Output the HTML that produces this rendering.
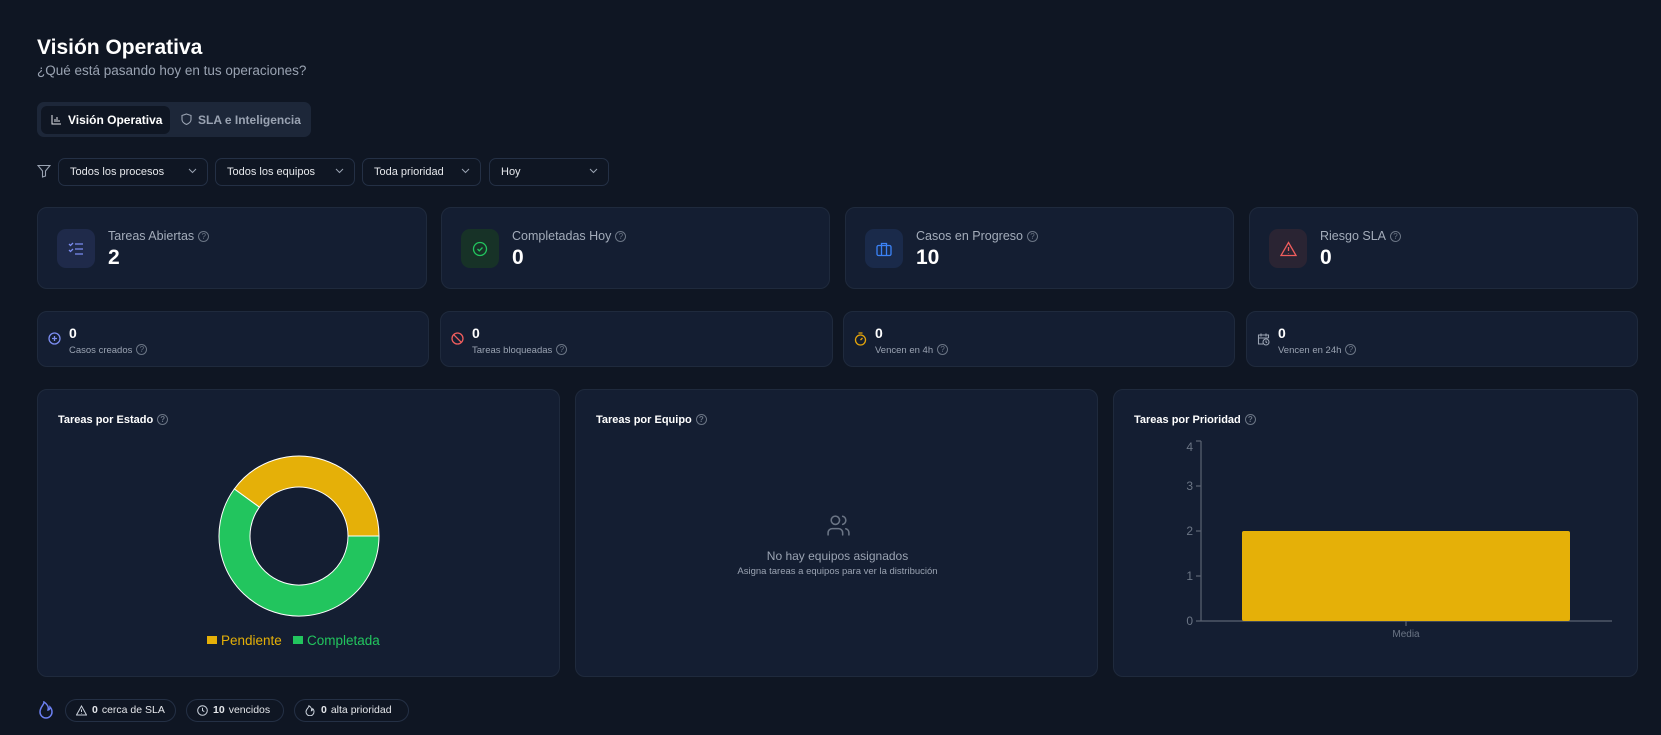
<!DOCTYPE html>
<html><head><meta charset="utf-8"><style>
*{box-sizing:border-box;margin:0;padding:0}
body{width:1661px;height:735px;background:#0f1623;font-family:"Liberation Sans",sans-serif;color:#e5e7eb;position:relative;overflow:hidden}
.a{position:absolute}
.card{position:absolute;background:#141e32;border:1px solid #1f2a3d;border-radius:10px}
.sel{position:absolute;top:158px;height:28px;border:1px solid #243045;border-radius:7px;font-size:11px;color:#e5e7eb;padding:0 0 0 11px;line-height:26px;background:#0f1623}
.sel svg{position:absolute;right:10px;top:9px}
.ib{position:absolute;left:19px;top:21px;width:38px;height:39px;border-radius:9px;display:flex;align-items:center;justify-content:center}
.lbl{position:absolute;left:70px;top:21px;font-size:12.5px;color:#a3acba}
.val{position:absolute;left:70px;top:38px;font-size:21px;font-weight:bold;color:#fff}
.q{display:inline-block;width:11px;height:11px;border:1px solid #6b7585;border-radius:50%;font-size:8px;line-height:9px;text-align:center;color:#6b7585;vertical-align:1px;margin-left:4px}
.sv{position:absolute;left:31px;top:13px;font-size:14px;font-weight:bold;color:#fff}
.sl{position:absolute;left:31px;top:32px;font-size:9.5px;color:#9aa3b2}
.si{position:absolute;left:10px;top:20px}
.ct{position:absolute;left:20px;top:24px;font-size:11px;font-weight:bold;color:#fff}
.pill{position:absolute;top:699px;height:23px;border:1px solid #243045;border-radius:12px;font-size:10.5px;color:#e5e7eb;line-height:21px;padding-left:26px}
.pill b{margin-right:4px}
.pill svg{position:absolute;left:10px;top:5px}
</style></head><body>
<div class="a" style="left:37px;top:36px;font-size:21px;font-weight:bold;color:#fff">Visión Operativa</div>
<div class="a" style="left:37px;top:63px;font-size:13.5px;color:#9aa3b2">¿Qué está pasando hoy en tus operaciones?</div>

<div class="a" style="left:37px;top:102px;width:274px;height:35px;background:#1d2739;border-radius:7px"></div>
<div class="a" style="left:41px;top:106px;width:129px;height:28px;background:#0f1623;border-radius:6px"></div>
<svg class="a" style="left:51px;top:114px" width="11" height="11" viewBox="0 0 11 11" fill="none" stroke="#e5e7eb" stroke-width="1"><path d="M1 1v9h9M4 8V5M6 8V3M8 8V6"/></svg>
<div class="a" style="left:68px;top:113px;font-size:12px;font-weight:bold;color:#fff">Visión Operativa</div>
<svg class="a" style="left:181px;top:113px" width="11" height="12" viewBox="0 0 11 12" fill="none" stroke="#9aa3b2" stroke-width="1.1"><path d="M5.5 1L10 2.5v4c0 2.5-2.2 4-4.5 5C3.2 10.5 1 9 1 6.5v-4z"/></svg>
<div class="a" style="left:198px;top:113px;font-size:12px;color:#9aa3b2;font-weight:bold">SLA e Inteligencia</div>

<svg class="a" style="left:37px;top:164px" width="14" height="14" viewBox="0 0 14 14" fill="none" stroke="#9aa3b2" stroke-width="1.1"><path d="M1 1.5h12L8.5 7v5L5.5 13V7z"/></svg>
<div class="sel" style="left:58px;width:150px">Todos los procesos<svg width="9" height="6"><path d="M1 1l3.5 3.5L8 1" stroke="#9aa3b2" fill="none"/></svg></div>
<div class="sel" style="left:215px;width:140px">Todos los equipos<svg width="9" height="6"><path d="M1 1l3.5 3.5L8 1" stroke="#9aa3b2" fill="none"/></svg></div>
<div class="sel" style="left:362px;width:119px">Toda prioridad<svg width="9" height="6"><path d="M1 1l3.5 3.5L8 1" stroke="#9aa3b2" fill="none"/></svg></div>
<div class="sel" style="left:489px;width:120px">Hoy<svg width="9" height="6"><path d="M1 1l3.5 3.5L8 1" stroke="#9aa3b2" fill="none"/></svg></div>

<div class="card" style="left:37px;top:207px;width:390px;height:82px">
 <div class="ib" style="background:#1f2a4a"><svg width="16" height="16" viewBox="0 0 16 16" fill="none" stroke="#7b8cf0" stroke-width="1.3"><path d="M1 3l1.5 1.5L5 2M1 9l1.5 1.5L5 8M7 3h8M7 8h8M7 13h8"/></svg></div>
 <div class="lbl">Tareas Abiertas<span class="q">?</span></div><div class="val">2</div></div>
<div class="card" style="left:441px;top:207px;width:389px;height:82px">
 <div class="ib" style="background:#173227"><svg width="16" height="16" viewBox="0 0 16 16" fill="none" stroke="#22c55e" stroke-width="1.3"><circle cx="8" cy="8" r="6.5"/><path d="M5.5 8l1.8 1.8L10.5 6.5"/></svg></div>
 <div class="lbl">Completadas Hoy<span class="q">?</span></div><div class="val">0</div></div>
<div class="card" style="left:845px;top:207px;width:389px;height:82px">
 <div class="ib" style="background:#1a2a4a"><svg width="16" height="16" viewBox="0 0 16 16" fill="none" stroke="#3b82f6" stroke-width="1.3"><rect x="1" y="4.5" width="14" height="10" rx="1.5"/><path d="M5.5 4.5V2.5h5v2M5.5 4.5v10M10.5 4.5v10"/></svg></div>
 <div class="lbl">Casos en Progreso<span class="q">?</span></div><div class="val">10</div></div>
<div class="card" style="left:1249px;top:207px;width:389px;height:82px">
 <div class="ib" style="background:#2a2433"><svg width="17" height="16" viewBox="0 0 17 16" fill="none" stroke="#ef5d5d" stroke-width="1.3"><path d="M8.5 1.5L16 14.5H1z M8.5 6v4M8.5 12v.5"/></svg></div>
 <div class="lbl">Riesgo SLA<span class="q">?</span></div><div class="val">0</div></div>

<div class="card" style="left:37px;top:311px;width:392px;height:56px"><svg class="si" width="13" height="13" viewBox="0 0 13 13" fill="none" stroke="#7b8cf0" stroke-width="1.3"><circle cx="6.5" cy="6.5" r="5.5"/><path d="M6.5 4v5M4 6.5h5"/></svg><div class="sv">0</div><div class="sl">Casos creados<span class="q">?</span></div></div>
<div class="card" style="left:440px;top:311px;width:393px;height:56px"><svg class="si" width="13" height="13" viewBox="0 0 13 13" fill="none" stroke="#ef5d5d" stroke-width="1.3"><circle cx="6.5" cy="6.5" r="5.5"/><path d="M2.6 2.6l7.8 7.8"/></svg><div class="sv">0</div><div class="sl">Tareas bloqueadas<span class="q">?</span></div></div>
<div class="card" style="left:843px;top:311px;width:392px;height:56px"><svg class="si" width="13" height="14" viewBox="0 0 13 14" fill="none" stroke="#e5a50a" stroke-width="1.3"><circle cx="6.5" cy="8" r="5"/><path d="M4.5 1h4M6.5 8l2-2"/></svg><div class="sv">0</div><div class="sl">Vencen en 4h<span class="q">?</span></div></div>
<div class="card" style="left:1246px;top:311px;width:392px;height:56px"><svg class="si" width="13" height="14" viewBox="0 0 13 14" fill="none" stroke="#9aa3b2" stroke-width="1.1"><path d="M6 12H1.5V3h10v3M1.5 6h10M4 1.5v3M9 1.5v3"/><circle cx="9" cy="10" r="3"/><path d="M9 8.5V10l1 .8"/></svg><div class="sv">0</div><div class="sl">Vencen en 24h<span class="q">?</span></div></div>

<div class="card" style="left:37px;top:389px;width:523px;height:288px"><div class="ct">Tareas por Estado<span class="q">?</span></div></div>
<div class="card" style="left:575px;top:389px;width:523px;height:288px"><div class="ct">Tareas por Equipo<span class="q">?</span></div>
 <svg class="a" style="left:250px;top:123px" width="25" height="25" viewBox="0 0 24 24" fill="none" stroke="#6b7585" stroke-width="1.5" stroke-linecap="round"><path d="M16 21v-2a4 4 0 0 0-4-4H6a4 4 0 0 0-4 4v2"/><circle cx="9" cy="7" r="4"/><path d="M22 21v-2a4 4 0 0 0-3-3.87M16 3.13a4 4 0 0 1 0 7.75"/></svg>
 <div class="a" style="left:0;width:523px;top:159px;text-align:center;font-size:12px;color:#9aa3b2">No hay equipos asignados</div>
 <div class="a" style="left:0;width:523px;top:176px;text-align:center;font-size:9.5px;color:#9aa3b2">Asigna tareas a equipos para ver la distribución</div></div>
<div class="card" style="left:1113px;top:389px;width:525px;height:288px"><div class="ct">Tareas por Prioridad<span class="q">?</span></div></div>

<svg class="a" style="left:0;top:0" width="1661" height="735">
 <path d="M379,536 A80,80 0 0 0 234.3,489 L259.4,507.2 A49,49 0 0 1 348,536 Z" fill="#e5b008" stroke="#fff" stroke-width="1"/>
 <path d="M234.3,489 A80,80 0 1 0 379,536 L348,536 A49,49 0 1 1 259.4,507.2 Z" fill="#22c55e" stroke="#fff" stroke-width="1"/>
 <rect x="207" y="636" width="10" height="8" fill="#e5b008"/>
 <text x="221" y="645" font-size="13.5" fill="#e5b008" font-family="Liberation Sans">Pendiente</text>
 <rect x="293" y="636" width="10" height="8" fill="#22c55e"/>
 <text x="307" y="645" font-size="13.5" fill="#22c55e" font-family="Liberation Sans">Completada</text>
 <g stroke="#5b6372" stroke-width="1.2" fill="none"><path d="M1201 441V621H1612M1196 441h5M1196 486h5M1196 531h5M1196 576h5M1196 621h5M1406 621v5"/></g>
 <g font-size="12" fill="#6b7585" font-family="Liberation Sans" text-anchor="end"><text x="1193" y="451">4</text><text x="1193" y="490">3</text><text x="1193" y="535">2</text><text x="1193" y="580">1</text><text x="1193" y="625">0</text></g>
 <text x="1406" y="637" font-size="10" fill="#6b7585" font-family="Liberation Sans" text-anchor="middle">Media</text>
 <rect x="1242" y="531" width="328" height="90" rx="2" fill="#e5b008"/>
</svg>

<svg class="a" style="left:39px;top:701px" width="14" height="18" viewBox="0 0 14 18" fill="none" stroke="#6b7ff0" stroke-width="1.5"><path d="M5 1c0 3-4 5-4 10a6 6 0 0 0 12 0c0-2-1-4-2-5 0 2-1 3-2 3 1-3-1-6-4-8z"/></svg>
<div class="pill" style="left:65px;width:111px"><svg width="11" height="11" viewBox="0 0 11 11" fill="none" stroke="#cbd2dc" stroke-width="1"><path d="M5.5 1L10.5 10h-10z M5.5 4.5v2.5M5.5 8.3v.4"/></svg><b>0</b>cerca de SLA</div>
<div class="pill" style="left:186px;width:98px"><svg width="11" height="11" viewBox="0 0 11 11" fill="none" stroke="#cbd2dc" stroke-width="1"><circle cx="5.5" cy="5.5" r="4.8"/><path d="M5.5 2.8v2.8l1.8 1"/></svg><b>10</b>vencidos</div>
<div class="pill" style="left:294px;width:115px"><svg width="10" height="11" viewBox="0 0 10 11" fill="none" stroke="#cbd2dc" stroke-width="1"><path d="M4 .8c0 2-3 3-3 6a4 4 0 0 0 8 0c0-1-.6-2.4-1.3-3 0 1-.7 2-1.3 2 .6-2-.6-4-2.4-5z"/></svg><b>0</b>alta prioridad</div>
</body></html>
